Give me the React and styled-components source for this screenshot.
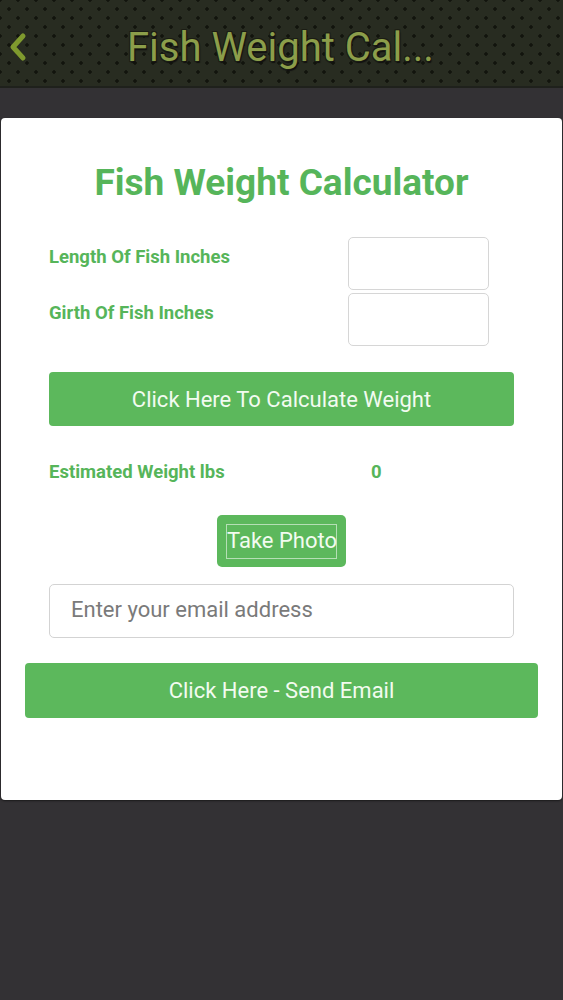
import React, { useState } from "react";
import styled, { createGlobalStyle } from "styled-components";

const GlobalStyle = createGlobalStyle`
  html, body {
    margin: 0;
    padding: 0;
    background: #333134;
    font-family: Roboto, "Liberation Sans", sans-serif;
  }
  * { box-sizing: border-box; }
`;

const green = "#56b55a";
const buttonGreen = "#5cb85c";

export default function App() {
  const [length, setLength] = useState("");
  const [girth, setGirth] = useState("");
  const [email, setEmail] = useState("");

  const weight =
    length && girth ? ((girth * girth * length) / 800).toFixed(2) : 0;

  return (
    <Page>
      <GlobalStyle />
      <ActionBar>
        <Back aria-label="back">
          <svg width="20" height="30" viewBox="0 0 20 30">
            <path
              d="M15 4 L5 15 L15 26"
              fill="none"
              stroke="#7f9a2e"
              strokeWidth="5"
              strokeLinecap="round"
              strokeLinejoin="round"
            />
          </svg>
        </Back>
        <BarTitle>Fish Weight Cal...</BarTitle>
      </ActionBar>

      <Card>
        <Heading>Fish Weight Calculator</Heading>

        <Fields>
          <FieldRow>
            <Label>Length Of Fish Inches</Label>
            <SmallInput
              value={length}
              onChange={(e) => setLength(e.target.value)}
            />
          </FieldRow>
          <FieldRow>
            <Label>Girth Of Fish Inches</Label>
            <SmallInput
              value={girth}
              onChange={(e) => setGirth(e.target.value)}
            />
          </FieldRow>
        </Fields>

        <WideButton>Click Here To Calculate Weight</WideButton>

        <ResultRow>
          <Label>Estimated Weight lbs</Label>
          <Label>{weight}</Label>
        </ResultRow>

        <PhotoButton>
          <span>Take Photo</span>
        </PhotoButton>

        <EmailInput
          placeholder="Enter your email address"
          value={email}
          onChange={(e) => setEmail(e.target.value)}
        />

        <SendButton>Click Here - Send Email</SendButton>
      </Card>
    </Page>
  );
}

const Page = styled.div`
  min-height: 1000px;
  background: #333134;
`;

const ActionBar = styled.header`
  height: 88px;
  display: flex;
  align-items: center;
  padding: 8px 0 0 8px;
  background-color: #282c21;
  background-image: radial-gradient(#12140d 1.5px, transparent 1.9px),
    radial-gradient(#12140d 1.5px, transparent 1.9px);
  background-size: 18px 18px;
  background-position: 0px 0px, 9px 9px;
  border-bottom: 2px solid #1f211c;
`;

const Back = styled.div`
  display: flex;
  width: 20px;
`;

const BarTitle = styled.h1`
  margin: 0 0 0 99px;
  font-size: 40px;
  font-weight: 400;
  color: #8c9e4a;
  text-shadow: -1px -1px 0 #1b1d14, 1px -1px 0 #1b1d14, -1px 1px 0 #1b1d14,
    1px 2px 1px #111;
`;

const Card = styled.main`
  margin: 30px 1px 0;
  background: #fff;
  border-radius: 4px;
  padding: 44px 24px 82px;
  display: flex;
  flex-direction: column;
  box-shadow: 0 1px 2px rgba(0, 0, 0, 0.5);
`;

const Heading = styled.h2`
  margin: 0;
  text-align: center;
  font-size: 37px;
  line-height: 42px;
  font-weight: 700;
  color: ${green};
`;

const Fields = styled.div`
  margin: 33px 24px 0;
  display: flex;
  flex-direction: column;
  gap: 3px;
`;

const FieldRow = styled.div`
  display: flex;
  align-items: flex-start;
  justify-content: space-between;
  padding-right: 25px;
`;

const Label = styled.span`
  font-size: 18.5px;
  line-height: 24px;
  font-weight: 700;
  color: ${green};
  padding-top: 8px;
`;

const SmallInput = styled.input`
  width: 141px;
  height: 53px;
  border: 1px solid #d6d6d6;
  border-radius: 5px;
  font-size: 20px;
  padding: 0 10px;
  outline: none;
`;

const WideButton = styled.button`
  margin: 26px 24px 0;
  height: 54px;
  border: none;
  border-radius: 4px;
  background: ${buttonGreen};
  color: #f2fbf0;
  font-family: inherit;
  font-size: 22px;
  cursor: pointer;
`;

const ResultRow = styled.div`
  margin: 34px 24px 0;
  display: grid;
  grid-template-columns: 322px auto;
  align-items: center;

  span {
    padding-top: 0;
  }
`;

const PhotoButton = styled.button`
  align-self: center;
  margin-top: 31px;
  width: 129px;
  height: 52px;
  border: none;
  border-radius: 5px;
  background: ${buttonGreen};
  color: #f2fbf0;
  font-family: inherit;
  font-size: 22px;
  padding: 0;
  white-space: nowrap;
  cursor: pointer;

  span {
    display: inline-block;
    border: 1px solid rgba(255, 255, 255, 0.55);
    padding: 3px 0 5px;
    width: 111px;
    text-align: left;
  }
`;

const EmailInput = styled.input`
  margin: 17px 24px 0;
  height: 54px;
  border: 1px solid #d3d3d3;
  border-radius: 5px;
  padding: 0 21px 4px;
  font-family: inherit;
  font-size: 22px;
  color: #333;
  outline: none;

  &::placeholder {
    color: #7a7a7a;
  }
`;

const SendButton = styled(WideButton)`
  margin: 25px 0 0;
  height: 55px;
`;
